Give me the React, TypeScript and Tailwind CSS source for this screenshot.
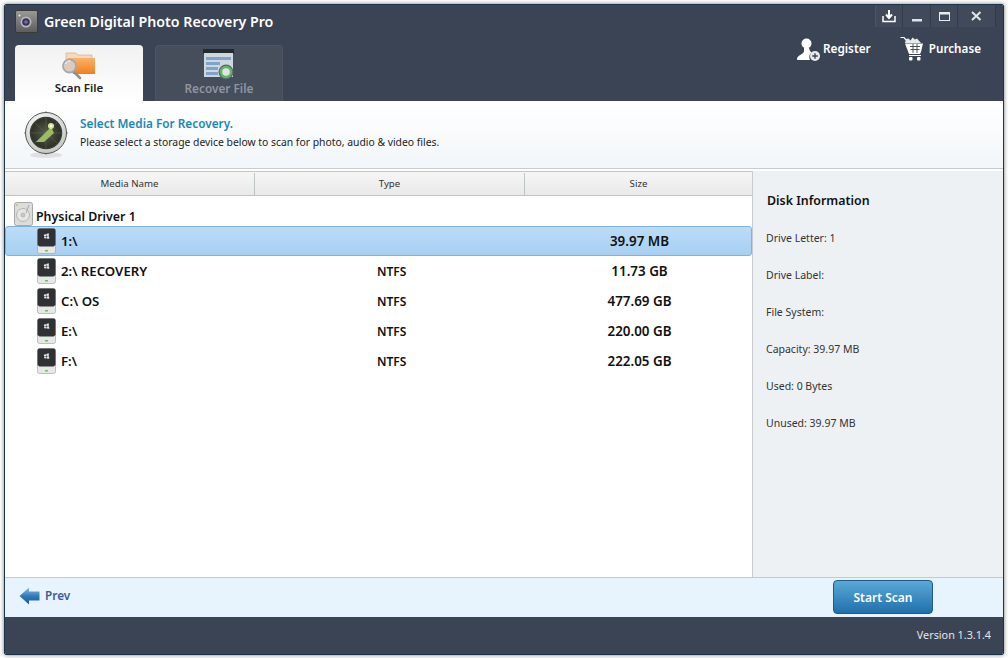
const FONT = "font-['Noto_Sans','Open_Sans',sans-serif]";

const DRIVES = [
  { name: "1:\\", type: "", size: "39.97 MB", selected: true },
  { name: "2:\\ RECOVERY", type: "NTFS", size: "11.73 GB" },
  { name: "C:\\ OS", type: "NTFS", size: "477.69 GB" },
  { name: "E:\\", type: "NTFS", size: "220.00 GB" },
  { name: "F:\\", type: "NTFS", size: "222.05 GB" },
];

const DISK_INFO = [
  "Drive Letter: 1",
  "Drive Label:",
  "File System:",
  "Capacity: 39.97 MB",
  "Used: 0 Bytes",
  "Unused: 39.97 MB",
];

function AppLogo() {
  return (
    <svg width="23" height="23" viewBox="0 0 23 23" className="shrink-0">
      <defs>
        <linearGradient id="logoBg" x1="0" y1="0" x2="0" y2="1">
          <stop offset="0" stopColor="#9a9a9a" />
          <stop offset="1" stopColor="#5c5c5c" />
        </linearGradient>
      </defs>
      <rect x="0.5" y="0.5" width="22" height="22" rx="1.5" fill="url(#logoBg)" stroke="#3a3a3a" />
      <circle cx="11" cy="12" r="5.5" fill="#b9b9bd" />
      <circle cx="11" cy="12" r="3.8" fill="#3c3550" />
      <circle cx="11" cy="12" r="1.8" fill="#7a68b0" />
      <circle cx="4.500" cy="5.500" r="1" fill="#eee" />
    </svg>
  );
}

function ScanIcon() {
  return (
    <svg width="34" height="28" viewBox="0 0 34 28">
      <defs>
        <linearGradient id="folder" x1="0" y1="0" x2="0" y2="1">
          <stop offset="0" stopColor="#fbb36a" />
          <stop offset="1" stopColor="#f07f1e" />
        </linearGradient>
      </defs>
      <path d="M4 1h10l2 2h14v6H4z" fill="#f3d9bd" stroke="#e0a36c" strokeWidth="0.6" />
      <path d="M6 6h27v16H11z" fill="url(#folder)" />
      <path d="M11 19l7 7" stroke="#8f8f8f" strokeWidth="2.500" strokeLinecap="round" />
      <circle cx="7.500" cy="14" r="6.500" fill="#dccbbd" stroke="#a2aab1" strokeWidth="1.800" />
      <path d="M3.500 12a4.500 4.500 0 0 1 5-3" stroke="#fff" strokeWidth="1" fill="none" />
    </svg>
  );
}

function RecoverIcon() {
  return (
    <svg width="32" height="31" viewBox="0 0 32 31">
      <rect x="0" y="0" width="31" height="5" fill="#222a33" />
      <rect x="1" y="4" width="29" height="24" fill="#cfd6de" />
      <rect x="3" y="8" width="25" height="3" fill="#7fa3cf" />
      <rect x="3" y="13" width="14" height="3" fill="#7fa3cf" />
      <rect x="3" y="18" width="12" height="3" fill="#7fa3cf" />
      <rect x="3" y="23" width="12" height="3" fill="#7fa3cf" />
      <circle cx="23" cy="23" r="7.500" fill="#5c6570" />
      <circle cx="23" cy="23" r="5" fill="#dfe6e2" stroke="#63b56a" strokeWidth="2.500" />
    </svg>
  );
}

function RadarIcon() {
  return (
    <svg width="46" height="48" viewBox="0 0 46 48">
      <defs>
        <radialGradient id="radarRing" cx="0.4" cy="0.3" r="0.9">
          <stop offset="0" stopColor="#ffffff" />
          <stop offset="1" stopColor="#b4b9b2" />
        </radialGradient>
        <radialGradient id="radarScreen" cx="0.5" cy="0.5" r="0.6">
          <stop offset="0" stopColor="#555c4a" />
          <stop offset="1" stopColor="#23261f" />
        </radialGradient>
      </defs>
      <ellipse cx="23" cy="44" rx="16" ry="3" fill="#dde1e5" />
      <path d="M23 0v5M23 39v5M1 22h5M40 22h5" stroke="#8a8f8a" strokeWidth="1" />
      <circle cx="23" cy="22" r="20.500" fill="url(#radarRing)" stroke="#55594f" strokeWidth="1" />
      <circle cx="23" cy="22" r="15.500" fill="url(#radarScreen)" stroke="#3a3d35" strokeWidth="1.500" />
      <path d="M23 7v30M8 22h30M12 12l22 20M12 32l22-20" stroke="#5d6450" strokeWidth="0.600" />
      <path d="M13 31l15-15 3 6-10 9z" fill="#9dbb62" />
      <circle cx="28" cy="15" r="3" fill="#d8e88e" />
      <circle cx="28" cy="15" r="1.200" fill="#fdfff0" />
    </svg>
  );
}

function DiskIcon() {
  return (
    <svg width="19" height="24" viewBox="0 0 19 24" className="shrink-0">
      <rect x="0.5" y="0.5" width="18" height="23" rx="2" fill="#dcdcda" stroke="#a8a8a6" />
      <circle cx="9" cy="13" r="6.500" fill="#e6e6e4" stroke="#b5b5b3" />
      <circle cx="9" cy="13" r="2" fill="#c8c8c6" stroke="#a8a8a6" strokeWidth="0.6" />
      <path d="M15 3l-3 8" stroke="#b0b0ae" strokeWidth="1.200" />
      <circle cx="3" cy="3" r="0.8" fill="#b89b4a" />
    </svg>
  );
}

function DriveIcon() {
  return (
    <svg width="19" height="26" viewBox="0 0 19 26" className="shrink-0">
      <rect x="0.5" y="0.5" width="18" height="25" rx="2" fill="#e6e8e6" stroke="#9a9c9a" strokeWidth="0.6" />
      <path d="M0.500 2.500a2 2 0 0 1 2-2h14a2 2 0 0 1 2 2V17l-2 1.500H2.500L0.500 17z" fill="#2f3134" />
      <path d="M7 6.500l2-.5v2H7zM9.500 6l2.500-.5V8H9.500zM7 8.500h2v2l-2-.4zM9.500 8.500H12v2.500l-2.500-.5z" fill="#e8e8e8" transform="rotate(-6 9.500 8)" />
      <rect x="8" y="22" width="3" height="1.500" fill="#5fc95f" />
    </svg>
  );
}

function UserPlusIcon() {
  return (
    <svg width="24" height="24" viewBox="0 0 24 24">
      <circle cx="9.500" cy="6.500" r="5" fill="#fff" />
      <path d="M7 11h5l1 3 1.500 1.500a6.500 6.500 0 0 0-1.500 7.500H1c-1 0-1.200-1-.8-2C1.200 18 7 17 7 14z" fill="#fff" />
      <circle cx="18" cy="19" r="5" fill="#e8eaec" />
      <path d="M18 16.200v5.600M15.200 19h5.600" stroke="#3b4454" strokeWidth="1.400" />
    </svg>
  );
}

function CartIcon() {
  return (
    <svg width="24" height="25" viewBox="0 0 24 25">
      <path d="M0.500 1.500h3.500l3 3.500" stroke="#fff" strokeWidth="1.200" fill="none" />
      <path d="M6 3l2.500-0.500 2 2 2-3 2.500 2 2-1 4 4.500H5z" fill="#e8eaec" />
      <path d="M5 7.500h18l-2 8.500-1 2H9z" fill="#fff" />
      <path d="M10 10.500h10M10.500 13.500h9M13 8v9M17 8v9" stroke="#3b4454" strokeWidth="0.900" />
      <path d="M9 19.500h12" stroke="#fff" strokeWidth="1.200" />
      <rect x="9" y="21" width="3.500" height="3.500" rx="1" fill="#fff" />
      <rect x="17" y="21" width="3.500" height="3.500" rx="1" fill="#fff" />
    </svg>
  );
}

function PrevArrow() {
  return (
    <svg width="21" height="18" viewBox="0 0 21 18">
      <defs>
        <linearGradient id="arrow" x1="0" y1="0" x2="0" y2="1">
          <stop offset="0" stopColor="#8fc0e8" />
          <stop offset="0.5" stopColor="#2f7cbc" />
          <stop offset="1" stopColor="#1b5a94" />
        </linearGradient>
      </defs>
      <path d="M0.500 9L10 0.500V4.500h10.500v9H10v4z" fill="url(#arrow)" />
    </svg>
  );
}

function WindowControls() {
  return (
    <div className="flex h-[22px] border-l border-[#4c5565] bg-[#414a5a]">
      <button className="flex w-[27px] items-center justify-center border-r border-[#333b49]">
        <svg width="14" height="14" viewBox="0 0 14 14">
          <path d="M1 7v5.500h12V7" stroke="#fff" strokeWidth="1.500" fill="none" />
          <path d="M7 1v7M4 5.500L7 9l3-3.500" stroke="#fff" strokeWidth="2" fill="none" />
        </svg>
      </button>
      <button className="flex w-[28px] items-center justify-center border-r border-[#333b49]">
        <svg width="12" height="12" viewBox="0 0 12 12">
          <rect x="1" y="9" width="10" height="2.500" fill="#dfe2e6" />
        </svg>
      </button>
      <button className="flex w-[27px] items-center justify-center border-r border-[#333b49]">
        <svg width="11" height="9" viewBox="0 0 11 9">
          <rect x="0.500" y="0.500" width="10" height="8" fill="none" stroke="#e8eaec" />
          <rect x="0.500" y="0.500" width="10" height="2" fill="#e8eaec" />
        </svg>
      </button>
      <button className="flex w-[38px] items-center justify-center border-r border-[#333b49]">
        <svg width="11" height="10" viewBox="0 0 11 10">
          <path d="M1 1l8.500 8M9.500 1L1 9" stroke="#e3e5e8" strokeWidth="2" />
        </svg>
      </button>
    </div>
  );
}

export default function App() {
  return (
    <div className={`${FONT} h-[658px] w-[1008px] overflow-hidden bg-white pt-1 pr-1 pb-[3px] pl-1`}>
      <div className="flex h-full flex-col overflow-hidden rounded-[2px] border border-[#1f3348] shadow-[0_0_4px_#777]">
        {/* Title bar and tabs */}
        <header className="flex h-[96px] shrink-0 justify-between bg-[#3b4454]">
          <div className="flex flex-col pl-[10px]">
            <div className="flex h-[40px] items-start gap-[6px] pt-[5px]">
              <AppLogo />
              <span className="text-[14.2px] font-semibold leading-[23px] text-white">Green Digital Photo Recovery Pro</span>
            </div>
            <div className="flex gap-3">
              <div className="flex h-[56px] w-[128px] flex-col items-center rounded-t-[4px] bg-gradient-to-b from-[#f1f1f1] to-white pt-[7px]">
                <ScanIcon />
                <span className="text-[11.5px] font-semibold leading-[16px] text-[#222]">Scan File</span>
              </div>
              <div className="flex h-[56px] w-[128px] flex-col items-center rounded-t-[4px] border border-b-0 border-[#4d5563] bg-[#464e5c] pt-[3px]">
                <RecoverIcon />
                <span className="text-[11.8px] font-semibold leading-[16px] text-[#8f95a0]">Recover File</span>
              </div>
            </div>
          </div>
          <div className="flex flex-col items-end pr-[7px]">
            <WindowControls />
            <div className="mt-[9px] flex items-center gap-[29px] pr-[15px]">
              <div className="flex items-center gap-[2px]">
                <UserPlusIcon />
                <span className="text-[11.8px] font-semibold text-white">Register</span>
              </div>
              <div className="flex items-center gap-[5px]">
                <CartIcon />
                <span className="text-[11.7px] font-semibold text-white">Purchase</span>
              </div>
            </div>
          </div>
        </header>

        {/* Step banner */}
        <section className="flex h-[68px] shrink-0 items-center border-b border-[#c6ccd0] bg-gradient-to-b from-white to-[#f2f6f9] pl-[18px]">
          <RadarIcon />
          <div className="mb-[4px] ml-[11px]">
            <p className="text-[11.8px] font-semibold leading-[18px] text-[#1b88b4]">Select Media For Recovery.</p>
            <p className="pt-px text-[10.37px] leading-[18px] text-[#222]">
              Please select a storage device below to scan for photo, audio &amp; video files.
            </p>
          </div>
        </section>

        {/* Drive list and details */}
        <main className="flex min-h-0 flex-1 pt-[2px]">
          <div className="w-[748px] shrink-0 border-r border-[#c9cdd0] bg-white">
            <div className="grid h-[25px] grid-cols-[250px_270px_227px] border-y border-[#bfc4c6] bg-gradient-to-b from-[#f6f6f6] to-[#e9e9e9] pt-px text-[9.7px] text-[#333]">
              <div className="flex items-center justify-center border-r border-[#bfc4c6]">Media Name</div>
              <div className="flex items-center justify-center border-r border-[#bfc4c6]">Type</div>
              <div className="flex items-center justify-center">Size</div>
            </div>
            <div className="flex h-[30px] items-end gap-[3px] pl-[9px]">
              <DiskIcon />
              <span className="text-[12.4px] font-semibold leading-[18px] text-[#111]">Physical Driver 1</span>
            </div>
            {DRIVES.map((d) => (
              <div
                key={d.name}
                className={`grid h-[30px] grid-cols-[250px_270px_227px] items-center text-[13.2px] font-semibold text-[#111] ${
                  d.selected
                    ? "rounded-[3px] border border-[#7fb2de] bg-gradient-to-b from-[#bcdcf6] to-[#a6d0f3]"
                    : "border border-transparent"
                }`}
              >
                <div className="flex items-center gap-[5px] pl-[31px]">
                  <DriveIcon />
                  <span className="pt-px">{d.name}</span>
                </div>
                <div className="pl-[121px] pt-px text-[12px]">{d.type}</div>
                <div className="pt-px text-center text-[13.4px]">{d.size}</div>
              </div>
            ))}
          </div>
          <aside className="flex-1 bg-[#edf1f4] pl-[14px] pt-[21px]">
            <h2 className="text-[12.4px] font-semibold leading-[18px] text-[#111]">Disk Information</h2>
            <ul className="-ml-px mt-[19px] flex flex-col gap-[19px]">
              {DISK_INFO.map((row) => (
                <li key={row} className="text-[10.5px] leading-[18px] text-[#333]">
                  {row}
                </li>
              ))}
            </ul>
          </aside>
        </main>

        {/* Navigation */}
        <div className="flex h-[40px] shrink-0 items-center justify-between border-t border-[#c3cad0] bg-[#e8f4fd] pl-[14px] pr-[70px]">
          <div className="mb-[4px] flex items-center gap-[5px]">
            <PrevArrow />
            <span className="pt-px text-[11.8px] font-semibold text-[#3a5d96]">Prev</span>
          </div>
          <button className="mb-px h-[34px] w-[100px] rounded-[4px] border border-[#1d5c8c] bg-gradient-to-b from-[#5aa8d8] to-[#1f70ab] pt-px text-[12px] font-semibold text-white">
            Start Scan
          </button>
        </div>

        {/* Status bar */}
        <footer className="flex h-[37px] shrink-0 items-center justify-end bg-[#3b4454] pr-[12px]">
          <span className="text-[10.8px] text-[#e4e6e9]">Version 1.3.1.4</span>
        </footer>
      </div>
    </div>
  );
}
